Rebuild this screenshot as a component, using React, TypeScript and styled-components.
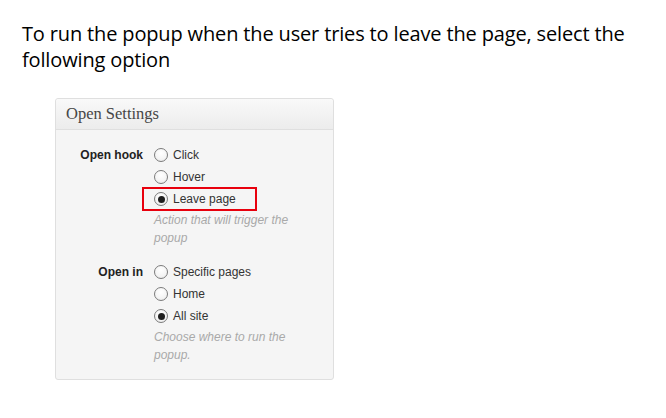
import React from "react";
import styled, { createGlobalStyle } from "styled-components";

const Global = createGlobalStyle`
  html, body { margin: 0; padding: 0; background: #ffffff; }
  body { width: 666px; height: 418px; overflow: hidden; }
`;

const Page = styled.div`
  display: flex;
  flex-direction: column;
  padding: 21px 0 0 22px;
`;

const Intro = styled.p`
  margin: 0;
  width: 620px;
  font-family: "Open Sans", "Noto Sans", sans-serif;
  font-size: 20px;
  line-height: 26px;
  letter-spacing: -0.15px;
  color: #000000;
`;

const Panel = styled.section`
  margin: 25px 0 0 33px;
  width: 277px;
  border: 1px solid #dfdfdf;
  border-radius: 3px;
  background: #f5f5f5;
  box-shadow: inset 0 1px 0 #ffffff;
`;

const PanelHeader = styled.h3`
  margin: 0;
  height: 30px;
  display: flex;
  align-items: center;
  padding: 0 10px;
  font-family: "Liberation Serif", "Times New Roman", serif;
  font-weight: normal;
  font-size: 16.5px;
  color: #464646;
  background: linear-gradient(to bottom, #f9f9f9, #ececec);
  border-bottom: 1px solid #dfdfdf;
  border-radius: 3px 3px 0 0;
`;

const Body = styled.div`
  display: flex;
  flex-direction: column;
  gap: 14px;
  padding: 14px 0 15px 0;
`;

const FieldRow = styled.div`
  display: grid;
  grid-template-columns: 87px 1fr;
  column-gap: 11px;
  align-items: start;
`;

const FieldLabel = styled.div`
  height: 22px;
  display: flex;
  align-items: center;
  justify-content: flex-end;
  font-family: "Liberation Sans", Arial, sans-serif;
  font-weight: bold;
  font-size: 12px;
  color: #222222;
`;

const Options = styled.div`
  display: flex;
  flex-direction: column;
`;

const Option = styled.label`
  position: relative;
  height: 22px;
  display: flex;
  align-items: center;
  gap: 5px;
  font-family: "Liberation Sans", Arial, sans-serif;
  font-size: 12px;
  color: #333333;
`;

const Highlight = styled.span`
  position: absolute;
  left: -12px;
  top: -1px;
  width: 111px;
  height: 20px;
  border: 2px solid #e8000d;
  pointer-events: none;
`;

const Radio = styled.span<{ $checked?: boolean }>`
  width: 12px;
  height: 12px;
  border-radius: 50%;
  border: 1px solid #7b7b7b;
  background: radial-gradient(circle at 50% 35%, #ffffff 0%, #f4f4f4 60%, #e4e4e4 100%);
  display: flex;
  align-items: center;
  justify-content: center;
  flex-shrink: 0;
  &::after {
    content: "";
    display: ${(p) => (p.$checked ? "block" : "none")};
    width: 7px;
    height: 7px;
    border-radius: 50%;
    background: #1f1f1f;
  }
`;

const Hint = styled.p`
  margin: 1px 0 0 0;
  width: 150px;
  font-family: "Liberation Sans", Arial, sans-serif;
  font-style: italic;
  font-size: 12px;
  line-height: 18px;
  color: #a9a9a9;
`;

type Field = {
  label: string;
  options: { text: string; checked?: boolean; highlight?: boolean }[];
  hint: string;
};

const fields: Field[] = [
  {
    label: "Open hook",
    options: [
      { text: "Click" },
      { text: "Hover" },
      { text: "Leave page", checked: true, highlight: true },
    ],
    hint: "Action that will trigger the popup",
  },
  {
    label: "Open in",
    options: [
      { text: "Specific pages" },
      { text: "Home" },
      { text: "All site", checked: true },
    ],
    hint: "Choose where to run the popup.",
  },
];

export default function App() {
  return (
    <>
      <Global />
      <Page>
        <Intro>
          To run the popup when the user tries to leave the page, select the following option
        </Intro>
        <Panel>
          <PanelHeader>Open Settings</PanelHeader>
          <Body>
            {fields.map((f) => (
              <FieldRow key={f.label}>
                <FieldLabel>{f.label}</FieldLabel>
                <Options>
                  {f.options.map((o) => (
                    <Option key={o.text}>
                      {o.highlight && <Highlight />}
                      <Radio $checked={o.checked} />
                      {o.text}
                    </Option>
                  ))}
                  <Hint>{f.hint}</Hint>
                </Options>
              </FieldRow>
            ))}
          </Body>
        </Panel>
      </Page>
    </>
  );
}
